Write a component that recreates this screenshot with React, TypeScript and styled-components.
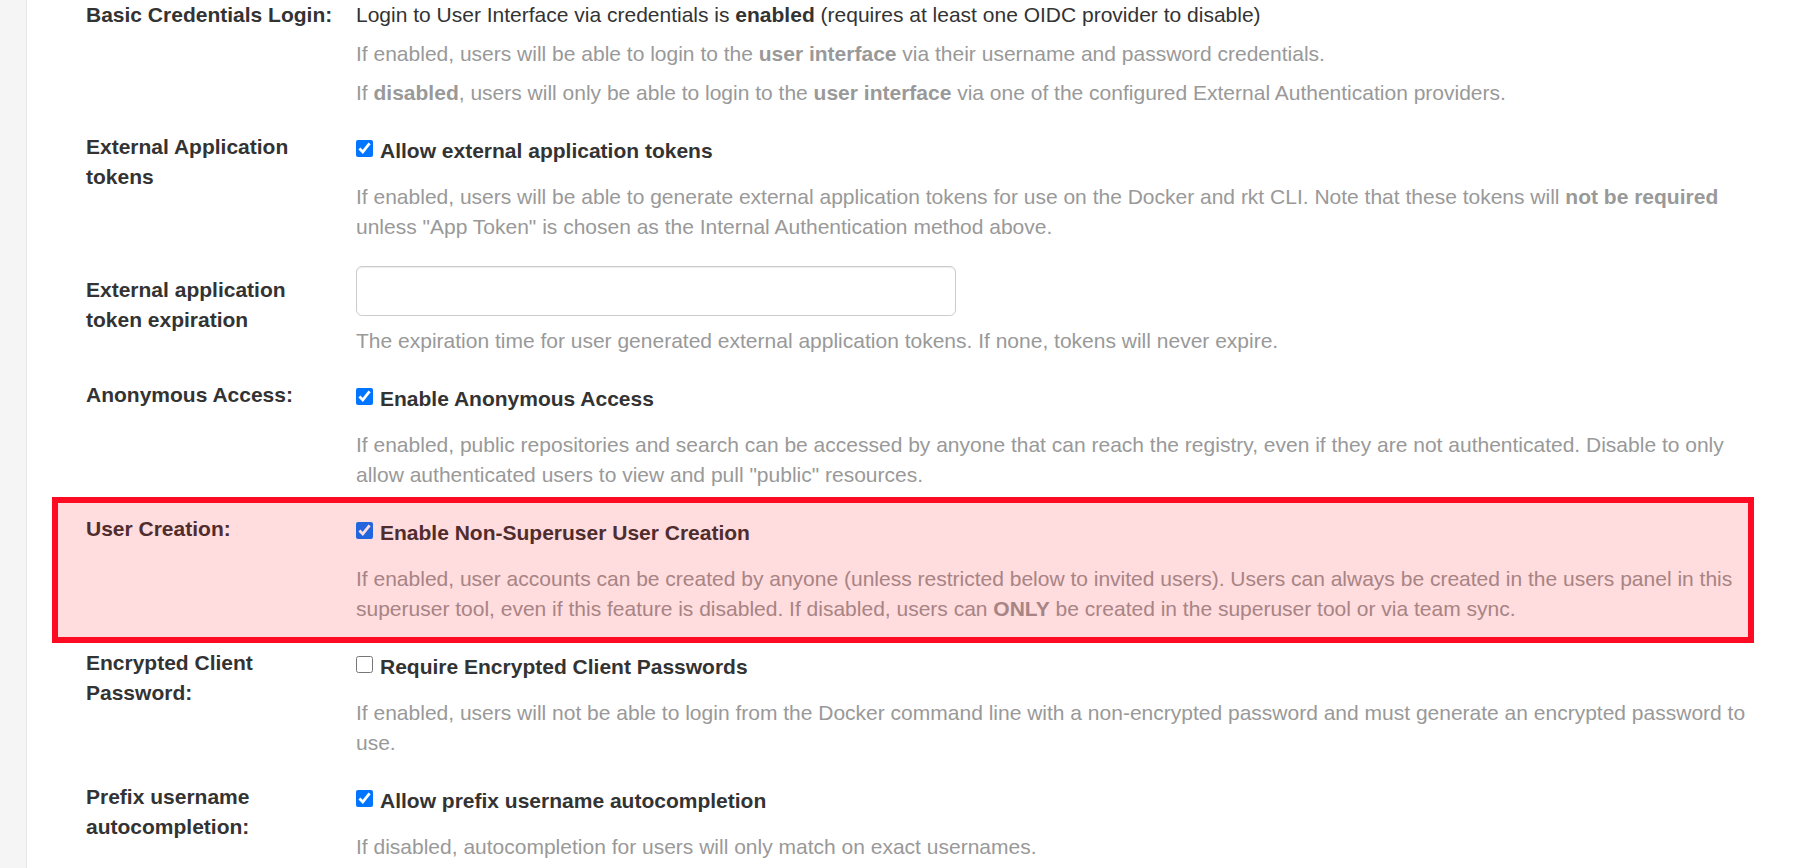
import React from "react";
import styled, { createGlobalStyle } from "styled-components";

const GlobalStyle = createGlobalStyle`
  * { box-sizing: border-box; }
  html, body { margin: 0; padding: 0; background: #ffffff; }
  body {
    font-family: "Liberation Sans", Arial, sans-serif;
    font-size: 21px;
    line-height: 30px;
    color: #333333;
    overflow: hidden;
  }
`;

const Page = styled.div`
  display: flex;
  height: 868px;
  overflow: hidden;
`;

const Sidebar = styled.aside`
  flex: 0 0 27px;
  background: #f5f5f5;
  border-right: 1px solid #e6e6e6;
`;

const Main = styled.main`
  flex: 1;
  padding: 0 36px 0 59px;
`;

const Row = styled.div<{ $first?: boolean }>`
  position: relative;
  display: grid;
  grid-template-columns: 270px 1fr;
  padding: ${(p) => (p.$first ? "0 0 12px" : "12px 0")};
`;

const Label = styled.div<{ $offset?: number }>`
  font-weight: bold;
  padding-right: 16px;
  padding-top: ${(p) => p.$offset ?? 0}px;
`;

const Field = styled.div`
  display: flex;
  flex-direction: column;
  min-width: 0;
`;

const Statement = styled.div``;

const CheckLine = styled.label`
  display: flex;
  align-items: flex-start;
  gap: 7px;
  margin-top: 4px;
  font-weight: bold;
  cursor: pointer;
`;

const Checkbox = styled.input`
  flex: 0 0 auto;
  width: 17px;
  height: 17px;
  margin: 4px 0 0 0;
  accent-color: #0075ff;
`;

const Help = styled.p<{ $gap?: number }>`
  margin: ${(p) => p.$gap ?? 16}px 0 0;
  color: #999999;

  strong {
    font-weight: bold;
  }
`;

const TextInput = styled.input`
  display: block;
  width: 600px;
  height: 50px;
  padding: 6px 12px;
  border: 1px solid #cccccc;
  border-radius: 6px;
  box-shadow: inset 0 1px 1px rgba(0, 0, 0, 0.075);
  font: inherit;
  color: #555555;
  background: #ffffff;
`;

const Highlight = styled.div`
  position: absolute;
  top: -5px;
  bottom: -7px;
  left: -34px;
  right: 6px;
  border: 6px solid #ff0a23;
  background: rgba(255, 0, 10, 0.137);
  pointer-events: none;
`;

type CheckRowProps = {
  label: string;
  text: string;
  checked: boolean;
  children: React.ReactNode;
  highlight?: boolean;
};

const CheckRow = ({ label, text, checked, children, highlight }: CheckRowProps) => (
  <Row>
    <Label>{label}</Label>
    <Field>
      <CheckLine>
        <Checkbox type="checkbox" defaultChecked={checked} />
        <span>{text}</span>
      </CheckLine>
      <Help>{children}</Help>
    </Field>
    {highlight && <Highlight />}
  </Row>
);

export default function App() {
  return (
    <Page>
      <GlobalStyle />
      <Sidebar />
      <Main>
        <Row $first>
          <Label>Basic Credentials Login:</Label>
          <Field>
            <Statement>
              Login to User Interface via credentials is <strong>enabled</strong> (requires at least one
              OIDC provider to disable)
            </Statement>
            <Help $gap={9}>
              If enabled, users will be able to login to the <strong>user interface</strong> via their
              username and password credentials.
            </Help>
            <Help $gap={9}>
              If <strong>disabled</strong>, users will only be able to login to the{" "}
              <strong>user interface</strong> via one of the configured External Authentication providers.
            </Help>
          </Field>
        </Row>

        <CheckRow label="External Application tokens" text="Allow external application tokens" checked>
          If enabled, users will be able to generate external application tokens for use on the Docker and
          rkt CLI. Note that these tokens will <strong>not be required</strong> unless "App Token" is chosen
          as the Internal Authentication method above.
        </CheckRow>

        <Row>
          <Label $offset={9}>External application token expiration</Label>
          <Field>
            <TextInput type="text" />
            <Help $gap={10}>
              The expiration time for user generated external application tokens. If none, tokens will never
              expire.
            </Help>
          </Field>
        </Row>

        <CheckRow label="Anonymous Access:" text="Enable Anonymous Access" checked>
          If enabled, public repositories and search can be accessed by anyone that can reach the registry,
          even if they are not authenticated. Disable to only allow authenticated users to view and pull
          "public" resources.
        </CheckRow>

        <CheckRow label="User Creation:" text="Enable Non-Superuser User Creation" checked highlight>
          If enabled, user accounts can be created by anyone (unless restricted below to invited users).
          Users can always be created in the users panel in this superuser tool, even if this feature is
          disabled. If disabled, users can <strong>ONLY</strong> be created in the superuser tool or via
          team sync.
        </CheckRow>

        <CheckRow
          label="Encrypted Client Password:"
          text="Require Encrypted Client Passwords"
          checked={false}
        >
          If enabled, users will not be able to login from the Docker command line with a non-encrypted
          password and must generate an encrypted password to use.
        </CheckRow>

        <CheckRow
          label="Prefix username autocompletion:"
          text="Allow prefix username autocompletion"
          checked
        >
          If disabled, autocompletion for users will only match on exact usernames.
        </CheckRow>
      </Main>
    </Page>
  );
}
